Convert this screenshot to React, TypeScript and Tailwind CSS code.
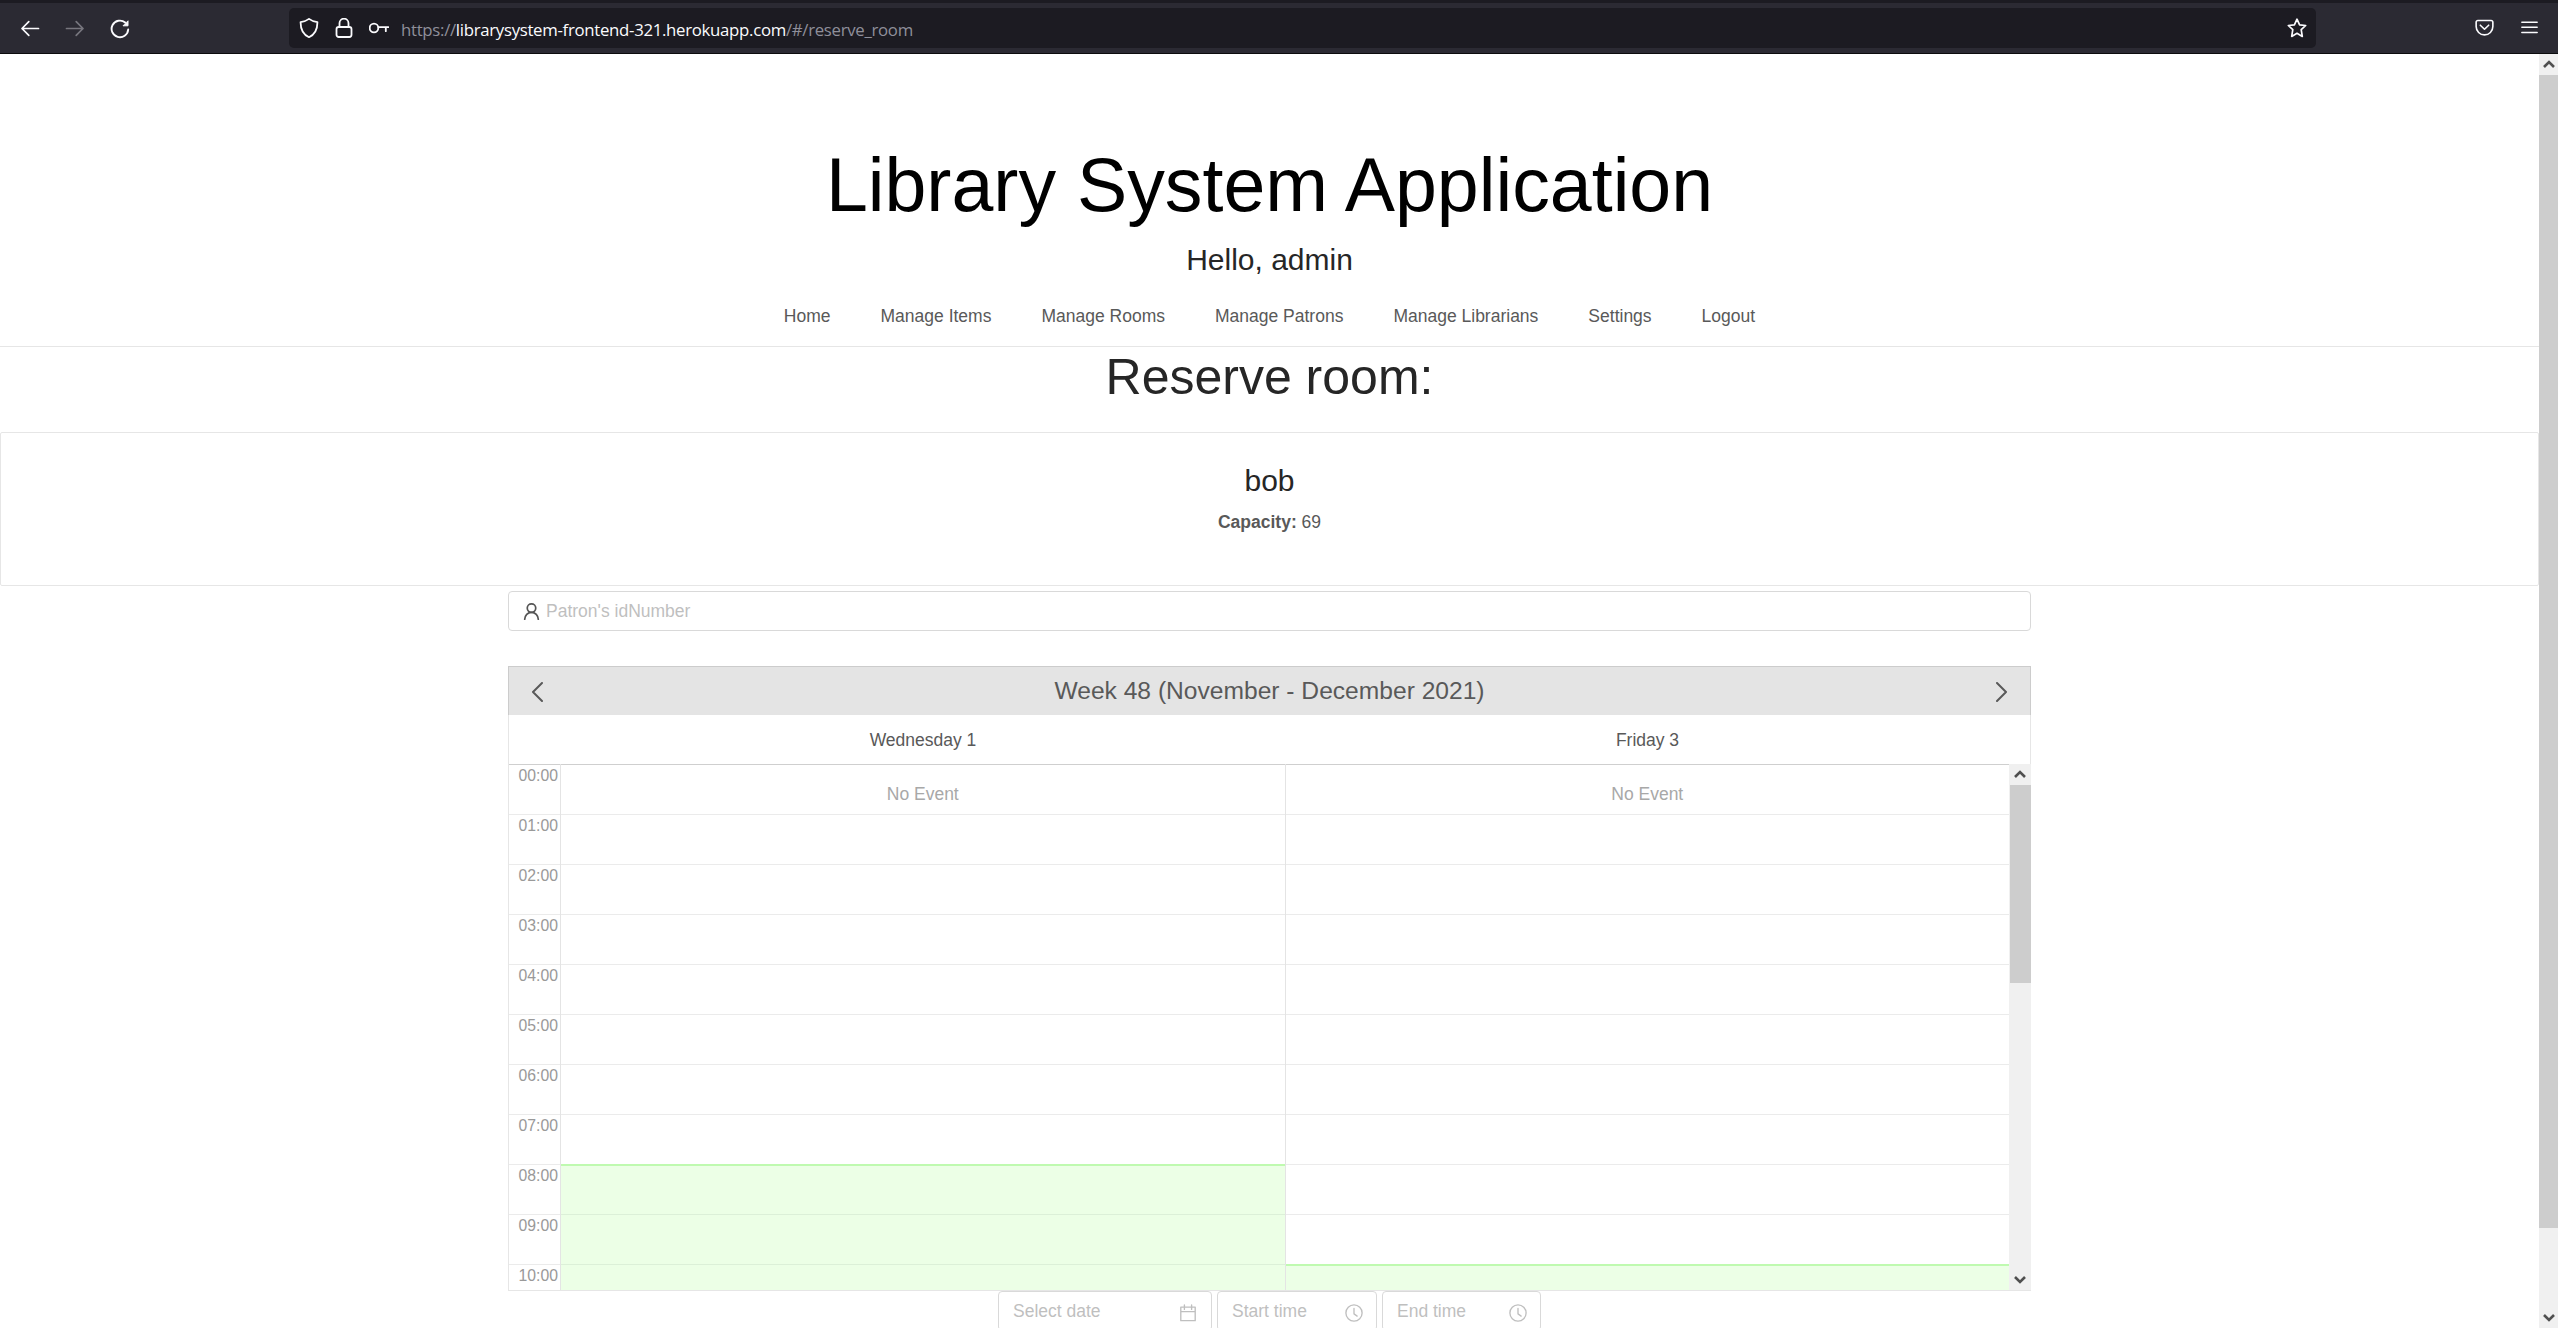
import React from "react";

const NAV = ["Home", "Manage Items", "Manage Rooms", "Manage Patrons", "Manage Librarians", "Settings", "Logout"];
const HOURS = ["00:00", "01:00", "02:00", "03:00", "04:00", "05:00", "06:00", "07:00", "08:00", "09:00", "10:00"];

type IconProps = { className?: string; children: React.ReactNode; box?: string; width?: number };

function Stroke({ className = "", children, box = "0 0 20 20", width = 1.7 }: IconProps) {
  return (
    <svg viewBox={box} className={"block shrink-0 " + className} fill="none" stroke="currentColor" strokeWidth={width} strokeLinecap="round" strokeLinejoin="round">
      {children}
    </svg>
  );
}

function BrowserBar() {
  return (
    <header className="flex h-[54px] shrink-0 items-start border-t-[3px] border-b border-t-[#1c1b22] border-b-[#0c0c0d] bg-[#2b2a33] text-[#fbfbfe]">
      <div className="mt-[16px] flex w-[289px] shrink-0 gap-[25px] pl-5">
        <Stroke className="size-5">
          <path d="M18.500 9.500H2M8.800 2.700L2 9.500l6.800 6.800" />
        </Stroke>
        <Stroke className="size-5 text-[#77767e]">
          <path d="M1.500 9.500H18M11.200 2.700l6.800 6.800-6.800 6.800" />
        </Stroke>
        <Stroke className="size-5" width={1.9}>
          <path d="M18.200 10.500A8.300 8.300 0 1 1 15.200 3.500" />
          <path d="M18 2.200v4.600h-4.600z" fill="currentColor" strokeWidth="1" />
        </Stroke>
      </div>
      <div className="mt-[5px] flex h-10 w-[2027px] items-center rounded-[5px] bg-[#1c1b22]">
        <Stroke className="ml-[10px] size-5" width={1.8}>
          <path d="M10 .9c2.500 1.900 5 2.700 8.400 3.200C18.500 11 16 16.500 10 19.200 4 16.500 1.500 11 1.600 4.100 5 3.600 7.500 2.800 10 .9z" />
        </Stroke>
        <Stroke className="ml-[15px] size-5" width={1.8}>
          <rect x="2.500" y="9" width="15" height="10" rx="2.200" />
          <path d="M5.500 9V5.200a4.500 4.500 0 0 1 9 0V9" />
        </Stroke>
        <Stroke className="ml-[15px] size-5" width={1.8}>
          <circle cx="5" cy="10" r="4.300" />
          <path d="M9.500 9.200h10M16.800 9.200v4" />
        </Stroke>
        <span className="mt-[3px] ml-[12px] whitespace-nowrap font-['Open_Sans',sans-serif] text-[16.800px] tracking-[-0.300px] text-[#8f8f9a]">
          https://<span className="text-[#fbfbfe]">librarysystem-frontend-321.herokuapp.com</span>/#/reserve_room
        </span>
        <Stroke className="mr-[9px] ml-auto size-5" width={1.7}>
          <path d="M10 1.200l2.600 5.600 6.100.7-4.500 4.200 1.100 6.700L10 15.300l-5.300 3.100 1.100-6.700L1.300 7.500l6.100-.7z" />
        </Stroke>
      </div>
      <div className="mt-[15px] mr-5 ml-auto flex gap-[27px]">
        <Stroke className="size-[19px]" width={1.700}>
          <path d="M3 2.600h14A1.800 1.800 0 0 1 18.800 4.400V9a8.800 8.800 0 0 1-17.600 0V4.400A1.800 1.800 0 0 1 3 2.600zM5.600 7.600l4.400 4.200 4.400-4.200" />
        </Stroke>
        <Stroke className="size-[17px]" width={1.800}>
          <path d="M1 5h18M1 11h18M1 17h18" />
        </Stroke>
      </div>
    </header>
  );
}

function ScrollArrow({ down = false }: { down?: boolean }) {
  return (
    <div className={"flex h-[21px] shrink-0 items-center justify-center text-[#505050] " + (down ? "pt-px" : "pb-[2px]")}>
      <svg viewBox="0 0 12 8" className={down ? "block h-2 w-3 rotate-180" : "block h-2 w-3"} fill="none" stroke="currentColor" strokeWidth="2.600">
        <path d="M1 7l5-5 5 5" />
      </svg>
    </div>
  );
}

function TopSection() {
  return (
    <>
      <div className="flex h-[293px] shrink-0 flex-col items-center border-b border-[#e6e6e6]">
        <h1 className="mt-[84px] text-[75.300px] leading-[94px] text-black">Library System Application</h1>
        <h3 className="mt-[8px] text-[30px] leading-[40px] text-[#262626]">Hello, admin</h3>
        <nav className="mt-[22px] flex gap-[50px] text-[17.5px] leading-[28px]">
          {NAV.map((n) => (
            <a key={n}>{n}</a>
          ))}
        </nav>
      </div>
      <h2 className="h-[85px] shrink-0 text-center text-[50px] leading-[60px] text-[#262626]">Reserve room:</h2>
      <section className="flex h-[154px] shrink-0 flex-col items-center rounded-[2px] border border-[#e6e6e6]">
        <h3 className="mt-[27px] text-[30px] leading-[42px] text-[#262626]">bob</h3>
        <p className="mt-[6px] text-[17.5px] leading-[28px]">
          <strong className="font-bold">Capacity:</strong> 69
        </p>
      </section>
    </>
  );
}

function Day({ freeFrom }: { freeFrom: number }) {
  return (
    <div className="min-w-0 flex-1 border-l border-[#e4e4e4]">
      {HOURS.map((h, i) => {
        const open = i >= freeFrom;
        const first = i === freeFrom;
        return (
          <div
            key={h}
            className={
              "flex h-[50px] items-start justify-center " +
              (first
                ? "border-t-2 border-[#bffab0] bg-[#ecffe6]"
                : open
                  ? "border-t border-[#dcf0d8] bg-[#ecffe6]"
                  : i === 0
                    ? "border-t border-[#cfcfcf]"
                    : "border-t border-[#ebebeb]")
            }
          >
            {i === 0 && <span className="mt-[15px] text-[17.5px] leading-[28px] text-[#a8a8a8]">No Event</span>}
          </div>
        );
      })}
    </div>
  );
}

function Calendar() {
  return (
    <section className="mt-[35px] flex h-[625px] shrink-0 flex-col">
      <div className="flex h-[49px] shrink-0 items-center justify-between border border-b-0 border-[#cccccc] bg-[#e4e4e4] px-[22px]">
        <Stroke className="mt-px h-5 w-3" box="0 0 12 20" width={2}>
          <path d="M11 1L2 10l9 9" />
        </Stroke>
        <span className="text-[24.600px] leading-[40px]">Week 48 (November - December 2021)</span>
        <Stroke className="mt-px h-5 w-3" box="0 0 12 20" width={2}>
          <path d="M1 1l9 9-9 9" />
        </Stroke>
      </div>
      <div className="flex h-[49px] shrink-0 items-center border-x border-[#e6e6e6] pt-[2px] text-center text-[17.500px]">
        <span className="w-[52px]" />
        <span className="w-[724px]">Wednesday 1</span>
        <span className="w-[725px]">Friday 3</span>
      </div>
      <div className="flex h-[527px] overflow-hidden border-b border-l border-[#e6e6e6]">
        <div className="w-[51px] shrink-0 text-[15.750px] leading-[20px] text-[#999]">
          {HOURS.map((h, i) => (
            <div key={h} className={"h-[50px] border-t pt-px pr-[2px] text-right " + (i === 0 ? "border-[#cfcfcf]" : "border-[#ebebeb]")}>
              {h}
            </div>
          ))}
        </div>
        <Day freeFrom={8} />
        <Day freeFrom={10} />
        <div className="flex w-[22px] shrink-0 flex-col bg-[#f0f0f0]">
          <ScrollArrow />
          <div className="ml-px h-[198px] bg-[#cdcdcd]" />
          <div className="flex-1" />
          <ScrollArrow down />
        </div>
      </div>
    </section>
  );
}

function Clock() {
  return (
    <Stroke className="size-[18px]" width={1.500}>
      <circle cx="10" cy="10" r="9" />
      <path d="M10 5v6l3.500 2.500" />
    </Stroke>
  );
}

function Field({ label, size, children }: { label: string; size: string; children: React.ReactNode }) {
  return (
    <div className={"flex h-10 shrink-0 items-start justify-between rounded-[4px] border border-[#d9d9d9] pr-[13px] pl-[14px] text-[17.500px] leading-[28px] text-[#bfbfbf] " + size}>
      <span className="mt-[5px]">{label}</span>
      <div className="mt-[12px]">{children}</div>
    </div>
  );
}

export default function App() {
  return (
    <div className="flex h-[1328px] w-[2558px] flex-col overflow-hidden bg-white font-['Liberation_Sans',Arial,sans-serif] text-[#595959]">
      <BrowserBar />
      <div className="flex min-h-0 flex-1">
        <main className="flex w-[2539px] shrink-0 flex-col overflow-hidden">
          <TopSection />
          <div className="mx-auto mt-[5px] flex w-[1523px] flex-col">
            <div className="flex h-[40px] shrink-0 items-center rounded-[4px] border border-[#d9d9d9] pl-[14px] text-[17.500px] text-[#bfbfbf]">
              <Stroke className="mr-[6px] size-[17px] text-[#555]" width={2}>
                <circle cx="10" cy="6" r="5" />
                <path d="M2 19.200c.2-4.700 3.500-8.200 8-8.200s7.800 3.500 8 8.200" />
              </Stroke>
              Patron's idNumber
            </div>
            <Calendar />
            <div className="ml-[490px] flex gap-[5px]">
              <Field label="Select date" size="w-[214px]">
                <Stroke className="mr-px size-[18px]" width={1.500}>
                  <path d="M2 3.500h16v15H2zM2 8.500h16M6 1v5M14 1v5" />
                </Stroke>
              </Field>
              <Field label="Start time" size="w-[160px]">
                <Clock />
              </Field>
              <Field label="End time" size="w-[159px]">
                <Clock />
              </Field>
            </div>
          </div>
        </main>
        <aside className="flex w-[19px] shrink-0 flex-col bg-[#f0f0f0]">
          <ScrollArrow />
          <div className="h-[1153px] bg-[#cdcdcd]" />
          <div className="flex-1" />
          <ScrollArrow down />
        </aside>
      </div>
    </div>
  );
}
